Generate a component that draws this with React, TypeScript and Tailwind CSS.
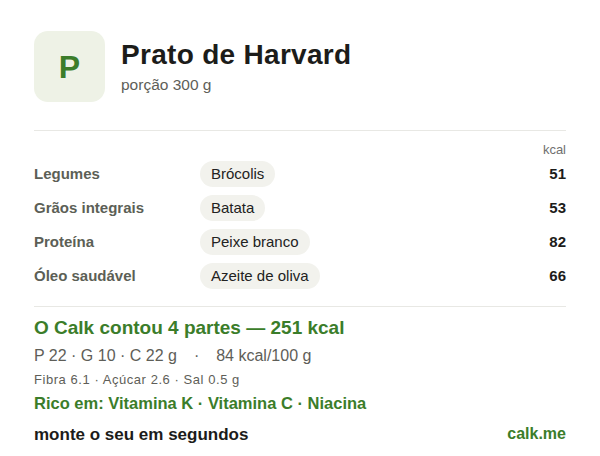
const rows = [
  { group: 'Legumes', item: 'Brócolis', kcal: 51 },
  { group: 'Grãos integrais', item: 'Batata', kcal: 53 },
  { group: 'Proteína', item: 'Peixe branco', kcal: 82 },
  { group: 'Óleo saudável', item: 'Azeite de oliva', kcal: 66 },
]

export default function App() {
  return (
    <div className="w-[600px] h-[456px] bg-white font-['Liberation_Sans',Arial,sans-serif] px-[34px] pt-[31px] overflow-hidden">
      {/* Header */}
      <div className="flex items-center gap-4">
        <div className="w-[71px] h-[71px] rounded-[14px] bg-[#eef2e6] flex items-center justify-center shrink-0">
          <span className="text-[32px] font-bold text-[#3b7d2a] leading-none">P</span>
        </div>
        <div className="flex flex-col">
          <h1 className="text-[28px] font-bold text-[#1c1c1a] leading-tight tracking-[0.3px]">Prato de Harvard</h1>
          <span className="text-[15.5px] text-[#5e5e58] mt-[1px]">porção 300 g</span>
        </div>
      </div>

      <div className="h-px bg-[#e8e8e4] mt-[28px]" />

      {/* Table */}
      <div className="text-right text-[13px] text-[#707070] mt-[12px] leading-none">kcal</div>
      <div className="flex flex-col mt-[1px]">
        {rows.map(r => (
          <div key={r.group} className="flex items-center h-[34px]">
            <span className="w-[166px] text-[15px] font-bold text-[#5c5f56]">{r.group}</span>
            <span className="px-[11px] h-[26px] flex items-center rounded-full bg-[#f2f2ed] text-[15px] text-[#222]">{r.item}</span>
            <span className="ml-auto text-[15px] font-bold text-[#1c1c1a]">{r.kcal}</span>
          </div>
        ))}
      </div>

      <div className="h-px bg-[#e8e8e4] mt-[13px]" />

      {/* Summary */}
      <div className="mt-[9px] text-[19px] font-bold text-[#3b7d2a] leading-tight">O Calk contou 4 partes — 251 kcal</div>
      <div className="mt-[6px] text-[16px] text-[#5e5e58] leading-tight">
        P 22 · G 10 · C 22 g<span className="mx-[17px]">·</span>84 kcal/100 g
      </div>
      <div className="mt-[6px] text-[13px] text-[#5e5e58] leading-tight tracking-[0.55px]">Fibra 6.1 · Açúcar 2.6 · Sal 0.5 g</div>
      <div className="mt-[5px] text-[16.5px] font-bold text-[#3b7d2a] leading-tight">Rico em: Vitamina K · Vitamina C · Niacina</div>

      <div className="flex items-center justify-between mt-[8px]">
        <span className="text-[17px] font-bold text-[#1c1c1a]">monte o seu em segundos</span>
        <span className="text-[16px] font-bold text-[#3b7d2a]">calk.me</span>
      </div>
    </div>
  )
}
